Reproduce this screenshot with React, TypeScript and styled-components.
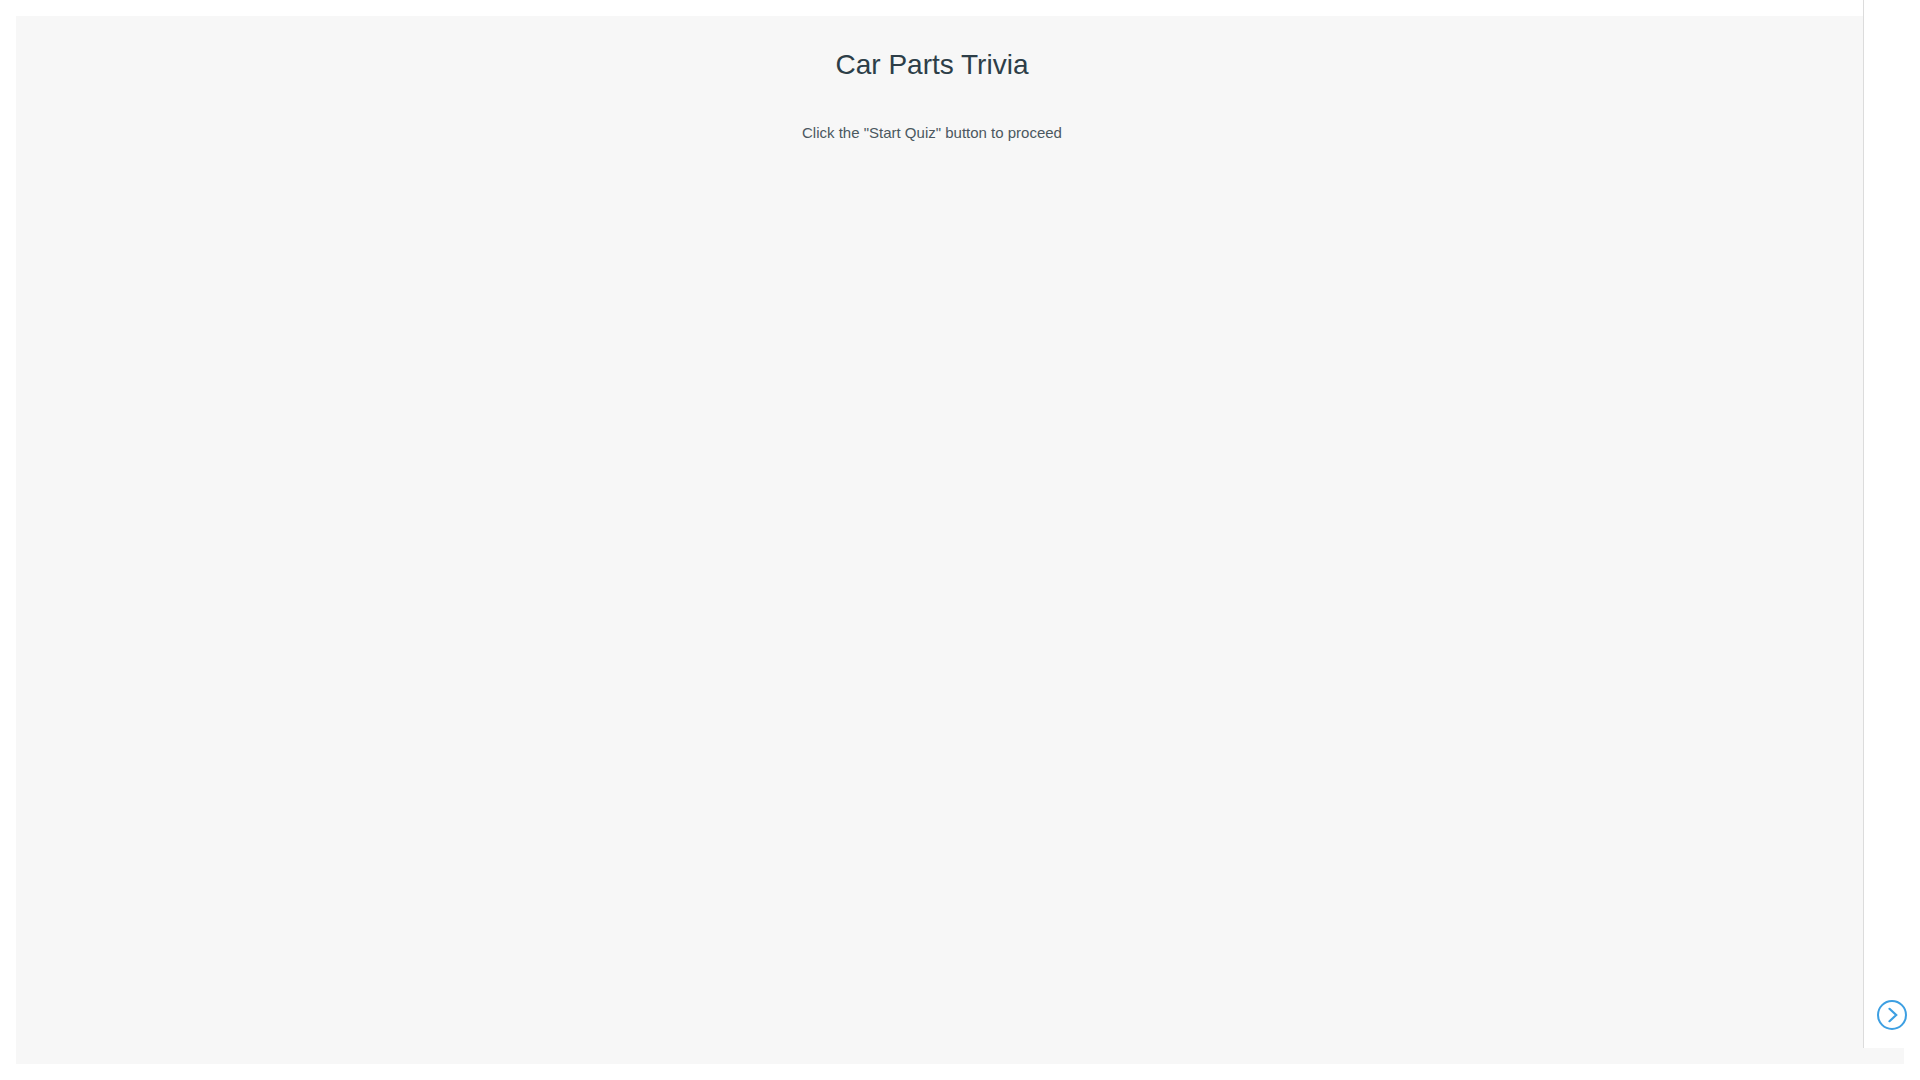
import React from "react";
import styled, { createGlobalStyle } from "styled-components";

const GlobalStyle = createGlobalStyle`
  *, *::before, *::after { box-sizing: border-box; }
  body {
    margin: 0;
    background: #ffffff;
    font-family: "Liberation Sans", Arial, sans-serif;
  }
`;

const Page = styled.div`
  display: flex;
  min-height: 100vh;
  padding: 16px;
`;

const Stage = styled.main`
  flex: 1;
  display: flex;
  flex-direction: column;
  align-items: center;
  gap: 32px;
  padding: 32px 56px 32px 0;
  background: #f7f7f7;
  text-align: center;
`;

const Title = styled.h1`
  margin: 0;
  color: #2d3e48;
  font-size: 28px;
  font-weight: 400;
  line-height: 34px;
`;

const Hint = styled.p`
  margin: 0;
  color: #4b5860;
  font-size: 15px;
  line-height: 38px;
`;

const Rail = styled.aside`
  position: fixed;
  top: 0;
  right: 0;
  bottom: 32px;
  width: 57px;
  display: flex;
  flex-direction: column;
  justify-content: flex-end;
  align-items: center;
  padding-bottom: 18px;
  border-left: 1px solid #dcdcdc;
  background: #ffffff;
`;

const StartButton = styled.button`
  display: flex;
  width: 30px;
  height: 30px;
  padding: 0;
  border: 0;
  border-radius: 50%;
  background: transparent;
  color: #3d9fe2;
  cursor: pointer;
`;

export default function App() {
  return (
    <>
      <GlobalStyle />
      <Page>
        <Stage>
          <Title>Car Parts Trivia</Title>
          <Hint>Click the "Start Quiz" button to proceed</Hint>
        </Stage>
      </Page>
      <Rail>
        <StartButton type="button" aria-label="Start Quiz">
          <svg width="30" height="30" viewBox="0 0 30 30" fill="none" stroke="currentColor" aria-hidden="true">
            <circle cx="15" cy="15" r="14" strokeWidth="2" />
            <path d="M12.5 8.8 L19.2 15 L12.5 21.2" strokeWidth="2.2" strokeLinecap="round" strokeLinejoin="miter" />
          </svg>
        </StartButton>
      </Rail>
    </>
  );
}
